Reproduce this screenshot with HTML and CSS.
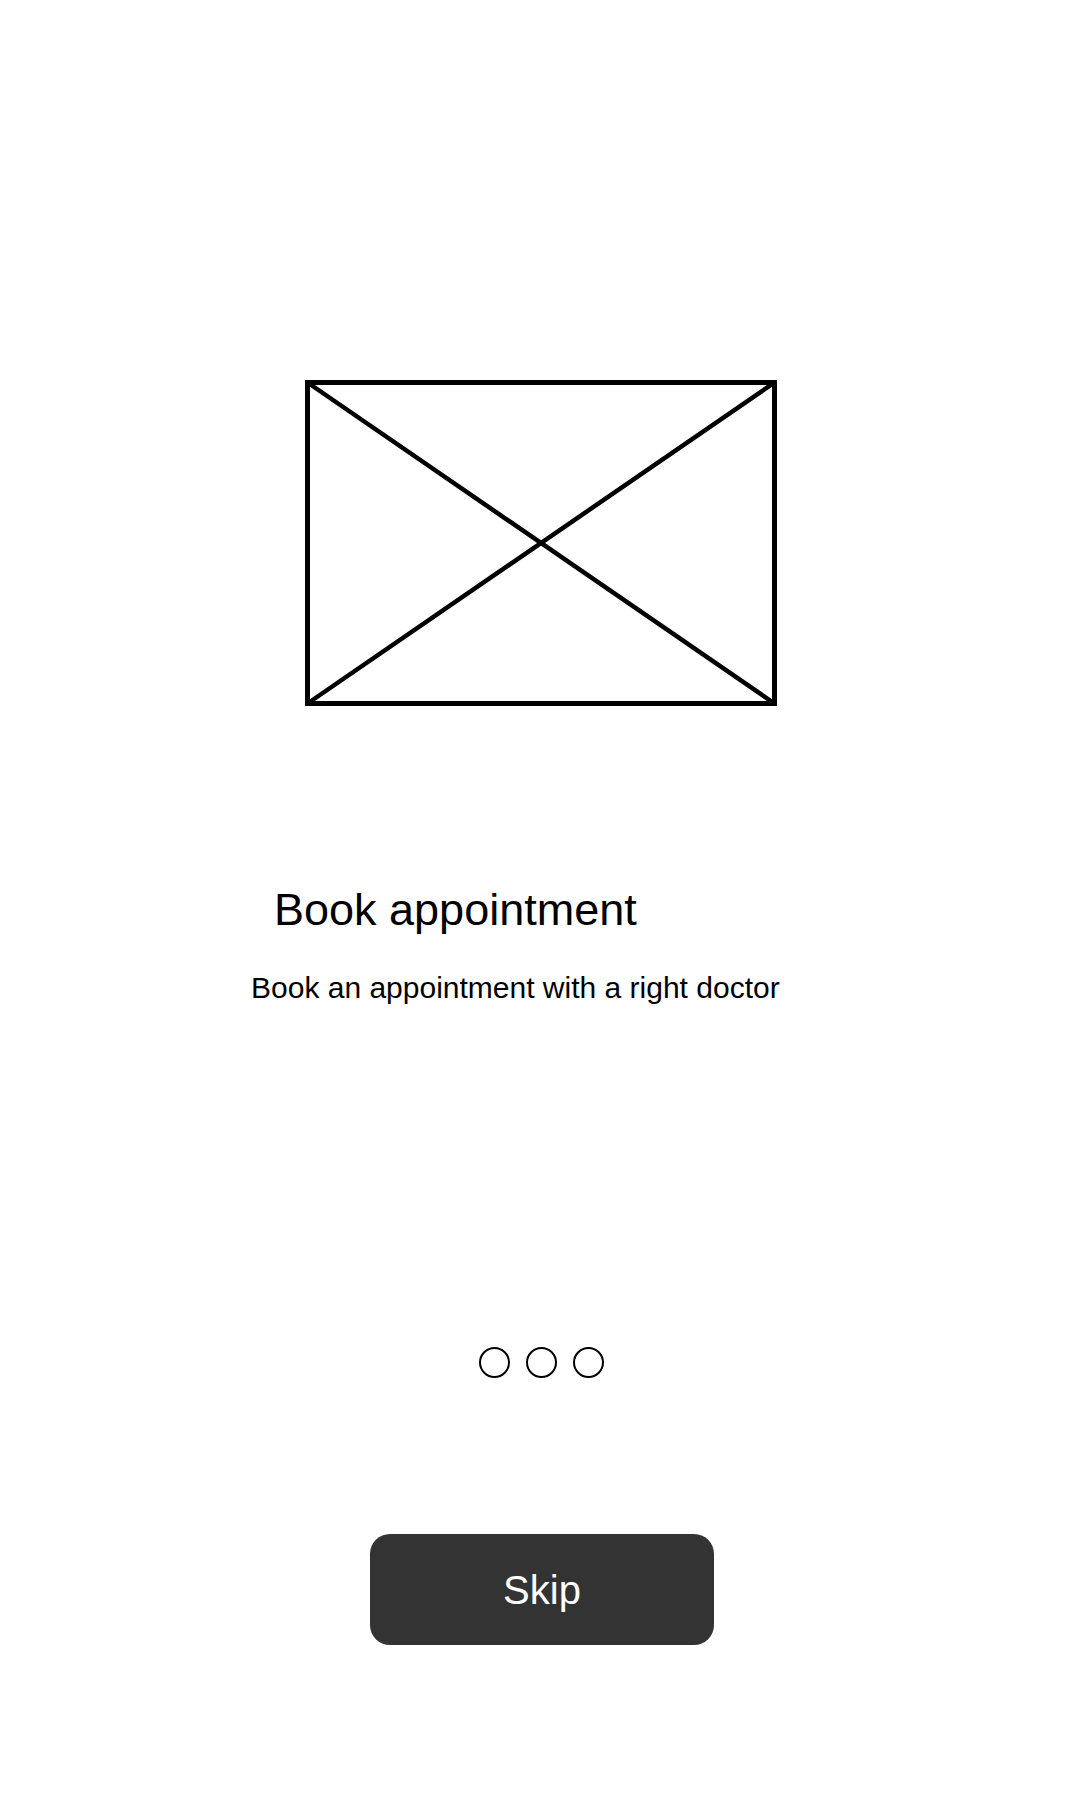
FILE: index.html
```html
<!DOCTYPE html>
<html lang="en">
<head>
<meta charset="utf-8">
<title>Book appointment</title>
<link rel="stylesheet" href="styles.css">
</head>
<body>
<main class="screen">
  <svg class="placeholder" width="472" height="326" viewBox="0 0 472 326" aria-hidden="true">
    <rect x="2.5" y="2.5" width="467" height="321" fill="none" stroke="#000" stroke-width="5"/>
    <line x1="2.5" y1="2.5" x2="469.5" y2="323.5" stroke="#000" stroke-width="4.5"/>
    <line x1="469.5" y1="2.5" x2="2.5" y2="323.5" stroke="#000" stroke-width="4.5"/>
  </svg>
  <h1 class="title">Book appointment</h1>
  <p class="subtitle">Book an appointment with a right doctor</p>
  <div class="dots">
    <span class="dot"></span>
    <span class="dot"></span>
    <span class="dot"></span>
  </div>
  <button class="skip" type="button">Skip</button>
</main>
</body>
</html>
```
FILE: styles.css
```css
html, body {
  margin: 0;
  padding: 0;
  background: #fff;
}

body {
  font-family: "Liberation Sans", Arial, sans-serif;
  color: #000;
}

.screen {
  width: 1080px;
  height: 1800px;
  display: flex;
  flex-direction: column;
  align-items: center;
  padding-top: 380px;
  box-sizing: border-box;
}

.placeholder {
  display: block;
  margin-left: 2px;
}

.title {
  align-self: flex-start;
  margin: 181px 0 0 274px;
  font-size: 45px;
  line-height: 45px;
  font-weight: normal;
}

.subtitle {
  align-self: flex-start;
  margin: 41px 0 0 251px;
  font-size: 30px;
  line-height: 30px;
}

.dots {
  display: flex;
  gap: 16px;
  margin-top: 344px;
  margin-left: 2px;
}

.dot {
  width: 31px;
  height: 31px;
  box-sizing: border-box;
  border: 2.5px solid #000;
  border-radius: 50%;
}

.skip {
  margin-top: 156px;
  margin-left: 4px;
  width: 344px;
  height: 111px;
  border: none;
  border-radius: 20px;
  background: #333333;
  color: #fff;
  font-family: "Liberation Sans", Arial, sans-serif;
  font-size: 40px;
  line-height: 1;
  padding: 0;
  display: flex;
  align-items: center;
  justify-content: center;
}
```
